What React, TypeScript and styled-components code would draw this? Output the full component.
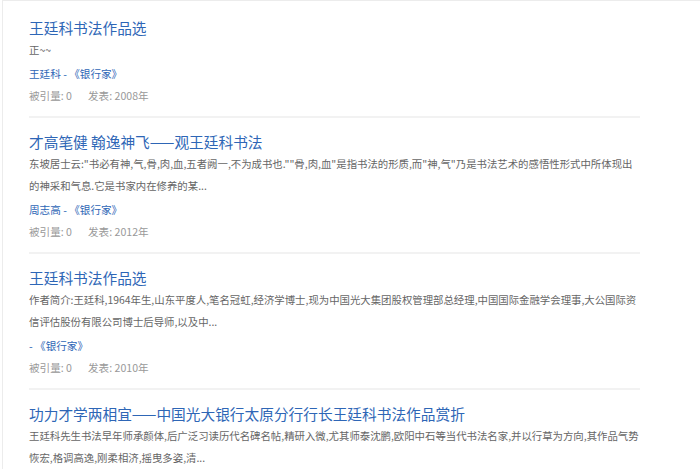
import styled, { createGlobalStyle } from "styled-components";

const GlobalStyle = createGlobalStyle`
  html, body {
    margin: 0;
    padding: 0;
    background: #ffffff;
  }
  body {
    font-family: "Noto Sans CJK SC", "Noto Sans", sans-serif;
  }
`;

const Panel = styled.div`
  margin-left: 2px;
  border-left: 1px solid #ececec;
  border-top: 1px solid #ececec;
  height: 469px;
  overflow: hidden;
  padding: 3px 60px 0 26px;
`;

const Item = styled.div`
  padding: 13px 0 9px;
  border-bottom: 2px solid #f2f2f2;
`;

const Title = styled.a`
  display: block;
  font-size: 14.7px;
  line-height: 22px;
  color: #2e66b6;
  text-decoration: none;
  cursor: pointer;
`;

const Summary = styled.p`
  margin: 0;
  font-size: 10.4px;
  line-height: 22px;
  color: #666666;
`;

const Source = styled.div`
  margin-top: 2px;
  font-size: 10.6px;
  line-height: 22px;
  color: #2e66b6;
`;

const Meta = styled.div`
  display: flex;
  gap: 16px;
  font-size: 10.6px;
  line-height: 22px;
  color: #999999;
`;

interface Paper {
  title: string;
  summary: string;
  author: string;
  journal: string;
  cited: number;
  year: number;
}

const papers: Paper[] = [
  {
    title: "王廷科书法作品选",
    summary: "正~~",
    author: "王廷科",
    journal: "《银行家》",
    cited: 0,
    year: 2008,
  },
  {
    title: "才高笔健 翰逸神飞——观王廷科书法",
    summary:
      '东坡居士云:"书必有神,气,骨,肉,血,五者阙一,不为成书也.""骨,肉,血"是指书法的形质,而"神,气"乃是书法艺术的感悟性形式中所体现出的神采和气息.它是书家内在修养的某...',
    author: "周志高",
    journal: "《银行家》",
    cited: 0,
    year: 2012,
  },
  {
    title: "王廷科书法作品选",
    summary:
      "作者简介:王廷科,1964年生,山东平度人,笔名冠虹,经济学博士,现为中国光大集团股权管理部总经理,中国国际金融学会理事,大公国际资信评估股份有限公司博士后导师,以及中...",
    author: "",
    journal: "《银行家》",
    cited: 0,
    year: 2010,
  },
  {
    title: "功力才学两相宜——中国光大银行太原分行行长王廷科书法作品赏折",
    summary:
      "王廷科先生书法早年师承颜体,后广泛习读历代名碑名帖,精研入微,尤其师泰沈鹏,欧阳中石等当代书法名家,并以行草为方向,其作品气势恢宏,格调高逸,刚柔相济,摇曳多姿,清...",
    author: "王廷科",
    journal: "《银行家》",
    cited: 0,
    year: 2012,
  },
];

export default function App() {
  return (
    <>
      <GlobalStyle />
      <Panel>
        {papers.map((paper, i) => (
          <Item key={i}>
            <Title>{paper.title}</Title>
            <Summary>{paper.summary}</Summary>
            <Source>
              {paper.author} - {paper.journal}
            </Source>
            <Meta>
              <span>被引量: {paper.cited}</span>
              <span>发表: {paper.year}年</span>
            </Meta>
          </Item>
        ))}
      </Panel>
    </>
  );
}
